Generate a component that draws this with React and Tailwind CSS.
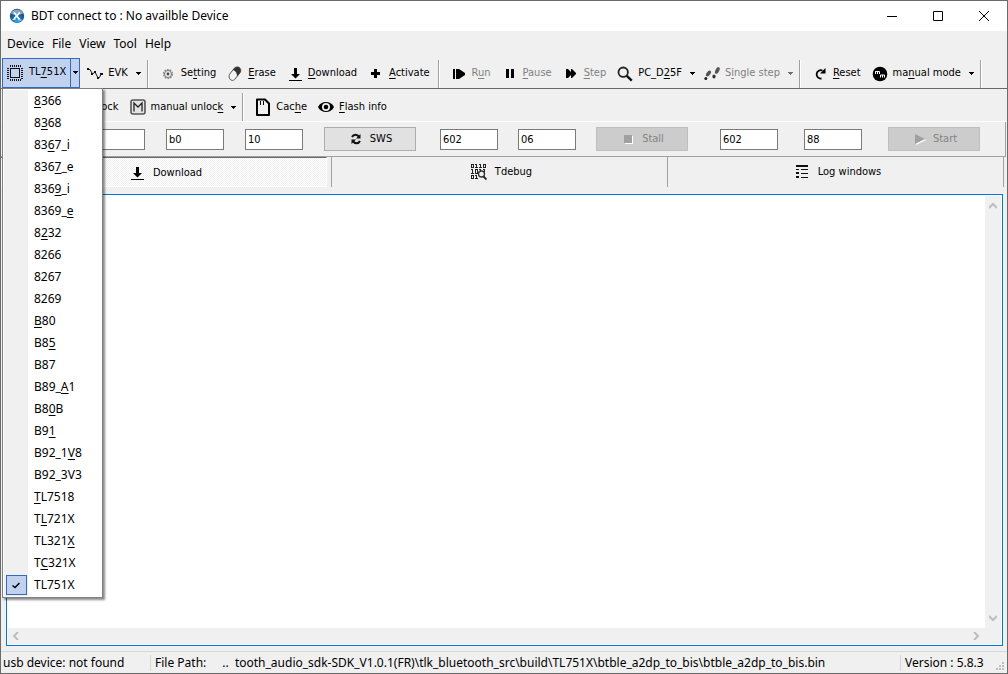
import { useState } from "react";

const devices = [
  "&8366", "8&368", "83&67_i", "836&7_e", "836&9_i", "8369_&e", "8&232", "8266",
  "8267", "8269", "&B80", "B8&5", "B87", "B89_&A1", "B8&0B", "B9&1", "B92_1&V8",
  "B92_3V3", "&TL7518", "T&L721X", "TL321&X", "T&C321X", "TL751X",
];

// "&" marks the access key, it is drawn underlined
function Label({ text }) {
  const at = text.indexOf("&");
  if (at < 0) return <span>{text}</span>;
  return (
    <span>
      {text.slice(0, at)}
      <u className="underline-offset-2">{text[at + 1]}</u>
      {text.slice(at + 2)}
    </span>
  );
}

function Svg({ w = 16, h = 16, children }) {
  return (
    <svg width={w} height={h} viewBox={`0 0 ${w} ${h}`} fill="none" className="shrink-0" aria-hidden="true">
      {children}
    </svg>
  );
}

const Caret = ({ color = "#000" }) => (
  <Svg w={5} h={3}>
    <path d="M0 0h5v1H4v1H3v1H2V2H1V1H0z" fill={color} shapeRendering="crispEdges" />
  </Svg>
);

const LogoIcon = () => (
  <Svg>
    <defs>
      <radialGradient id="ball" cx="0.5" cy="0.85" r="0.9">
        <stop offset="0" stopColor="#2fa8e6" />
        <stop offset="0.5" stopColor="#1d5f9c" />
        <stop offset="1" stopColor="#16395f" />
      </radialGradient>
    </defs>
    <circle cx="8" cy="8" r="7.2" fill="url(#ball)" />
    <path d="M1.8 5.4C3.4.2 12.6.2 14.2 5.4 11 7 5 7 1.8 5.4z" fill="#a9c3da" opacity="0.75" />
    <path d="M5 4.5l5.6 7M10.8 4.5L5 11" stroke="#fff" strokeWidth="1.8" />
    <path d="M3.5 11.5h3M9.5 12h3" stroke="#cfe6f5" strokeWidth="1.2" />
  </Svg>
);

const ChipIcon = () => (
  <Svg>
    <g shapeRendering="crispEdges" stroke="#111">
      <rect x="3.5" y="3.5" width="9" height="9" />
      <path d="M3 .5h11M3 1.5h11M3 14.5h11M3 15.5h11" strokeDasharray="1 1" />
      <path d="M.5 3v11M1.5 3v11M14.5 3v11M15.5 3v11" strokeDasharray="1 1" />
    </g>
  </Svg>
);

const WaveIcon = () => (
  <Svg>
    <path d="M1 3.5h2l2.5 4.5L8 6l3 6 1.5-.5L14.5 7" stroke="#111" />
    <path d="M0 2h2v2H0zM4 7h2v2H4zM7 5h2v2H7zM10 11h2v2h-2zM13 7h3v2h-3z" fill="#111" />
  </Svg>
);

const GearIcon = () => (
  <Svg>
    <circle cx="8" cy="8" r="4.5" stroke="#888" strokeDasharray="1.8 1" strokeWidth="1.2" />
    <circle cx="8" cy="8" r="3.5" stroke="#777" />
    <circle cx="8" cy="8" r="1.4" fill="#444" />
  </Svg>
);

const EraseIcon = () => (
  <Svg>
    <path d="M2.6 8.2L7.5 2c1.6-1.6 4.6-1.4 5.7.4.9 1.5.6 3.2-.2 4.4L7.500 13.600c-1.200 1.200-3.200 1-4.300-.2-1.200-1.400-1.400-3.600-.6-5.200z" stroke="#555" fill="#f4f4f4" />
    <path d="M6 4l1.500-2c1.600-1.600 4.600-1.400 5.700.4.9 1.500.6 3.200-.2 4.400L10 10.400C10 7.500 9 5 6 4z" fill="#333" />
  </Svg>
);

const DownloadIcon = () => (
  <Svg>
    <path d="M7 2h3v6h3l-4.500 4.500L4 8h3z" fill="#000" />
    <path d="M2 14h13v1H2z" fill="#000" />
  </Svg>
);

const PlusIcon = () => (
  <Svg>
    <path d="M6 3h3v3h3v3H9v3H6V9H3V6h3z" fill="#000" />
  </Svg>
);

const RunIcon = () => (
  <Svg>
    <path d="M2 3h2v10H2zM5 3h3l6 4v2l-6 4H5z" fill="#000" />
  </Svg>
);

const PauseIcon = () => (
  <Svg>
    <path d="M4 3h3v9H4zM9 3h3v9H9z" fill="#000" />
  </Svg>
);

const StepIcon = () => (
  <Svg>
    <path d="M3 3h2l3 3V3h1l4 4v1l-4 4H8V9l-3 3H3z" fill="#000" />
  </Svg>
);

const SearchIcon = () => (
  <Svg>
    <circle cx="6.2" cy="6.2" r="4.7" stroke="#222" strokeWidth="1.8" />
    <path d="M9.8 9.8l5 4.8" stroke="#111" strokeWidth="2.4" />
  </Svg>
);

const FeetIcon = () => (
  <Svg>
    <g fill="#555">
      <ellipse cx="4.5" cy="7.5" rx="1.9" ry="3.4" transform="rotate(35 4.5 7.5)" />
      <ellipse cx="1.8" cy="12.5" rx="1.5" ry="1.6" fill="#222" />
      <ellipse cx="13.3" cy="4.5" rx="1.9" ry="3.7" transform="rotate(25 13.3 4.5)" />
      <ellipse cx="10" cy="10.5" rx="1.6" ry="1.9" fill="#333" />
    </g>
  </Svg>
);

const ResetIcon = () => (
  <Svg>
    <path d="M9.5 12.5A4.2 4.2 0 1 1 10.5 4.5" stroke="#000" strokeWidth="1.8" />
    <path d="M8 7.5h5.5V2z" fill="#000" />
  </Svg>
);

const ManualModeIcon = () => (
  <Svg>
    <circle cx="8" cy="8" r="7.3" fill="#000" />
    <path d="M3.5 8V5.5h4V8M5.5 5.5V8M8.5 11.5V9h4v2.5M10.5 9v2.5" stroke="#fff" />
  </Svg>
);

const UnlockIcon = () => (
  <Svg>
    <rect x="1" y="1" width="14" height="14" rx="2" stroke="#555" strokeWidth="1.6" fill="#e4e4e4" />
    <path d="M4 12.5V4l4 4 4-4v8.5" stroke="#222" strokeWidth="1.3" />
  </Svg>
);

const CardIcon = () => (
  <Svg w={16} h={18}>
    <path d="M2 1.5h8l4 4V17H2z" stroke="#000" strokeWidth="2" strokeLinejoin="round" />
    <path d="M5.5 3v4M8.5 3v4" stroke="#000" />
  </Svg>
);

const EyeIcon = () => (
  <Svg>
    <path d="M0 8C3 1.2 13 1.2 16 8 13 14.8 3 14.8 0 8z" fill="#000" />
    <circle cx="8" cy="8" r="4" fill="#f0f0f0" />
    <circle cx="8" cy="8" r="2.3" fill="#000" />
  </Svg>
);

const RefreshIcon = () => (
  <Svg>
    <path d="M4 6C5.5 3 9.5 3 11 6M12 10C10.5 13 6.5 13 5 10" stroke="#111" strokeWidth="2" />
    <path d="M12.5 3v4.5H8zM3.5 13V8.5H8z" fill="#111" />
  </Svg>
);

const StopIcon = () => (
  <Svg>
    <path d="M5 5h8v8H5z" fill="#fff" />
    <path d="M4 4h8v8H4z" fill="#a0a0a0" />
  </Svg>
);

const StartIcon = () => (
  <Svg>
    <path d="M5 4l10 5-10 5z" fill="#fff" />
    <path d="M4 3l10 5-10 5z" fill="#a0a0a0" />
  </Svg>
);

const BinaryIcon = () => (
  <Svg>
    <g stroke="#222" shapeRendering="crispEdges">
      <path d="M.5.5h2v3h-2zM12.5.5h2v3h-2zM5.5 0v3M9.5 0v3M4 .5h2M8 .5h2M4 3.5h3M8 3.5h3" />
      <path d="M1.5 5v4M0 5.5h2M0 9.5h3M4.5 5.5h2v4h-2zM9.5 5v2M8 5.5h2M13.5 5v4M12 5.5h2" />
      <path d="M.5 11.5h2v3h-2zM5.5 11v4M4 11.5h2M4 14.5h3" />
    </g>
    <circle cx="10.5" cy="10" r="3" fill="#f0f0f0" stroke="#333" strokeWidth="1.3" />
    <path d="M12.5 12.5l3 3" stroke="#222" strokeWidth="1.8" />
  </Svg>
);

const ListIcon = () => (
  <Svg>
    <path d="M2 1h12v2H2zM2 5h3v1H2zM7 5h7v1H7zM2 8h3v2H2zM7 9h7v1H7zM2 12h3v2H2zM7 13h7v1H7z" fill="#111" />
  </Svg>
);

const Chevron = ({ d }) => (
  <Svg w={8} h={8}>
    <path d={d} stroke="#bdbdbd" strokeWidth="2" />
  </Svg>
);

function ToolButton({ icon, text, menu, disabled }) {
  return (
    <button
      disabled={disabled}
      className="flex h-7 items-center gap-0.5 whitespace-nowrap text-black disabled:text-[#808080]"
    >
      <span className="flex w-[22px] justify-center">{icon}</span>
      <Label text={text} />
      {menu ? (
        <span className="px-1.5">
          <Caret color={disabled ? "#6d6d6d" : "#000"} />
        </span>
      ) : (
        <span className="w-1.5" />
      )}
    </button>
  );
}

const Separator = () => (
  <span className="mr-2 h-7 w-0.5 shrink-0 border-l border-l-[#a0a0a0] border-r border-r-white" />
);

function Field({ label, value }) {
  return (
    <input
      aria-label={label}
      defaultValue={value}
      className="h-[21px] w-[58px] min-w-0 border border-[#7a7a7a] bg-white px-0.5 text-black outline-none"
    />
  );
}

function ActionButton({ icon, text, disabled }) {
  return (
    <button
      disabled={disabled}
      className="flex h-6 w-[92px] items-center justify-center gap-1.5 border border-[#adadad] bg-[#e1e1e1] text-black disabled:border-[#bfbfbf] disabled:bg-[#cccccc] disabled:text-[#838383]"
    >
      {icon}
      {text}
    </button>
  );
}

function DeviceMenu({ selected, onSelect }) {
  return (
    <ul
      role="menu"
      className="absolute top-full -left-px z-10 mt-px w-[101px] border border-[#808080] bg-white p-px font-['Noto_Sans',sans-serif] text-xs shadow-[2px_2px_2px_rgba(0,0,0,0.45)]"
    >
      {devices.map((name) => {
        const active = name === selected;
        return (
          <li key={name} role="none">
            <button
              role="menuitemradio"
              aria-checked={active}
              onClick={() => onSelect(name)}
              className="flex h-[22px] w-full items-center gap-1.5 text-left"
            >
              <span className="flex h-full w-6 items-center justify-center bg-[#f0f0f0]">
                {active && (
                  <span className="flex h-5 w-[21px] items-center justify-center border border-[#316ac5] bg-[#c1d2ee]">
                    <Svg w={8} h={8}>
                      <path d="M.5 4.5l2.5 2L7.5 2" stroke="#000" strokeWidth="1.5" />
                    </Svg>
                  </span>
                )}
              </span>
              <Label text={name} />
            </button>
          </li>
        );
      })}
    </ul>
  );
}

function App() {
  const [device, setDevice] = useState("TL751X");

  return (
    <div className="flex min-h-screen flex-col overflow-hidden border border-[#6b6b6b] bg-[#f0f0f0] font-['Noto_Sans',sans-serif] text-xs text-black">
      <header className="flex h-[30px] items-center bg-white pl-2">
        <LogoIcon />
        <h1 className="ml-1.5 flex-1">BDT connect to : No availble Device</h1>
        <button aria-label="Minimize" className="flex h-full w-[46px] items-center justify-center">
          <Svg w={10} h={10}><path d="M0 5h10v1H0z" fill="#000" /></Svg>
        </button>
        <button aria-label="Maximize" className="flex h-full w-[46px] items-center justify-center">
          <Svg w={10} h={10}><path d="M.5.5h9v9h-9z" stroke="#000" /></Svg>
        </button>
        <button aria-label="Close" className="flex h-full w-[46px] items-center justify-center">
          <Svg w={10} h={10}><path d="M0 0l10 10M10 0L0 10" stroke="#000" /></Svg>
        </button>
      </header>

      <nav className="flex h-[26px] items-center gap-2 pl-1.5">
        <button>Device</button>
        <button>File</button>
        <button>View</button>
        <button>Tool</button>
        <button>Help</button>
      </nav>

      <div className="font-['DejaVu_Sans_Condensed','DejaVu_Sans',sans-serif] text-[11px]">
        <div className="flex h-8 items-center border-b border-[#696969] pl-px">
          <div className="relative flex h-[30px] border border-[#316ac5] bg-[#c1d2ee]">
            <button className="flex items-center gap-1.5 px-1 whitespace-nowrap">
              <ChipIcon />
              <Label text="TL&751X" />
            </button>
            <button aria-label="Choose device" className="flex w-[9px] items-center justify-center border-l border-[#316ac5]">
              <Caret />
            </button>
            <DeviceMenu selected={device} onSelect={setDevice} />
          </div>
          <div className="flex items-center pt-0.5 pl-1">
            <ToolButton icon={<WaveIcon />} text="EVK" menu />
            <Separator />
            <ToolButton icon={<GearIcon />} text="Se&tting" />
            <ToolButton icon={<EraseIcon />} text="&Erase" />
            <ToolButton icon={<DownloadIcon />} text="&Download" />
            <ToolButton icon={<PlusIcon />} text="&Activate" />
            <Separator />
            <ToolButton icon={<RunIcon />} text="R&un" disabled />
            <ToolButton icon={<PauseIcon />} text="&Pause" disabled />
            <ToolButton icon={<StepIcon />} text="&Step" disabled />
            <ToolButton icon={<SearchIcon />} text="PC_D&25F" menu />
            <ToolButton icon={<FeetIcon />} text="S&ingle step" menu disabled />
            <Separator />
            <ToolButton icon={<ResetIcon />} text="&Reset" />
            <ToolButton icon={<ManualModeIcon />} text="ma&nual mode" menu />
            <Separator />
          </div>
        </div>

        <div className="flex h-[33px] items-center border-b border-white pt-1 pl-[61px]">
          <ToolButton icon={<UnlockIcon />} text="unlock" />
          <ToolButton icon={<UnlockIcon />} text="manual unloc&k" menu />
          <Separator />
          <ToolButton icon={<CardIcon />} text="Cac&he" />
          <ToolButton icon={<EyeIcon />} text="&Flash info" />
        </div>

        <div className="mr-px flex h-[35px] items-center border-r border-b border-[#a0a0a0] pl-[86px]">
          <div className="flex items-center gap-[21px]">
            <Field label="Length" value="" />
            <Field label="Address" value="b0" />
            <Field label="Size" value="10" />
            <ActionButton icon={<RefreshIcon />} text="SWS" />
          </div>
          <div className="ml-6 flex items-center gap-5">
            <Field label="Stall address" value="602" />
            <Field label="Stall value" value="06" />
            <ActionButton icon={<StopIcon />} text="Stall" disabled />
          </div>
          <div className="ml-8 flex items-center gap-[26px]">
            <Field label="Start address" value="602" />
            <Field label="Start value" value="88" />
            <ActionButton icon={<StartIcon />} text="Start" disabled />
          </div>
        </div>

        <div role="tablist" className="mr-[3px] grid h-[30px] grid-cols-[331fr_336fr_336fr]">
          <div className="border-r border-[#a0a0a0] pr-1">
            <button
              role="tab"
              aria-selected="true"
              className="flex h-full w-full items-center justify-center gap-2 border-t border-r border-b border-t-[#696969] border-r-white border-b-white bg-[repeating-conic-gradient(#f0f0f0_0_25%,#fff_0_50%)] bg-[length:2px_2px] pt-0.5 pl-1"
            >
              <DownloadIcon />
              Download
            </button>
          </div>
          <button role="tab" aria-selected="false" className="flex items-center justify-center gap-2 border-r border-[#a0a0a0] pl-1">
            <BinaryIcon />
            Tdebug
          </button>
          <button role="tab" aria-selected="false" className="flex items-center justify-center gap-2 border-r border-[#a0a0a0] pl-1">
            <ListIcon />
            Log windows
          </button>
        </div>
      </div>

      <main className="mt-[7px] mr-1 mb-[5px] ml-[5px] flex flex-1 flex-col border border-[#0078d7] bg-white p-px">
        <div className="flex flex-1">
          <textarea aria-label="Log output" className="flex-1 resize-none outline-none" />
          <div className="flex w-4 flex-col items-center justify-between bg-[#f0f0f0] py-1.5">
            <Chevron d="M0 6l4-4 4 4" />
            <Chevron d="M0 2l4 4 4-4" />
          </div>
        </div>
        <div className="flex h-4 items-center justify-between bg-[#f0f0f0] pr-[21px] pl-1">
          <Chevron d="M6 0L2 4l4 4" />
          <Chevron d="M2 0l4 4-4 4" />
        </div>
      </main>

      <footer className="relative flex h-[22px] items-center border-t border-[#d7d7d7] whitespace-pre">
        <span className="w-[149px] pl-0.5">usb device: not found</span>
        <span className="flex flex-1 gap-4 border-l border-[#d7d7d7] pl-1">
          <span>File Path:</span>
          <span>{"..  tooth_audio_sdk-SDK_V1.0.1(FR)\\tlk_bluetooth_src\\build\\TL751X\\btble_a2dp_to_bis\\btble_a2dp_to_bis.bin"}</span>
        </span>
        <span className="w-[107px] border-l border-[#d7d7d7] pl-1">Version : 5.8.3</span>
        <span className="absolute right-0.5 bottom-0.5">
          <Svg w={9} h={9}>
            <path d="M6 0h2v2H6zM3 3h2v2H3zM6 3h2v2H6zM0 6h2v2H0zM3 6h2v2H3zM6 6h2v2H6z" fill="#bfbfbf" />
          </Svg>
        </span>
      </footer>
    </div>
  );
}

export default App;
